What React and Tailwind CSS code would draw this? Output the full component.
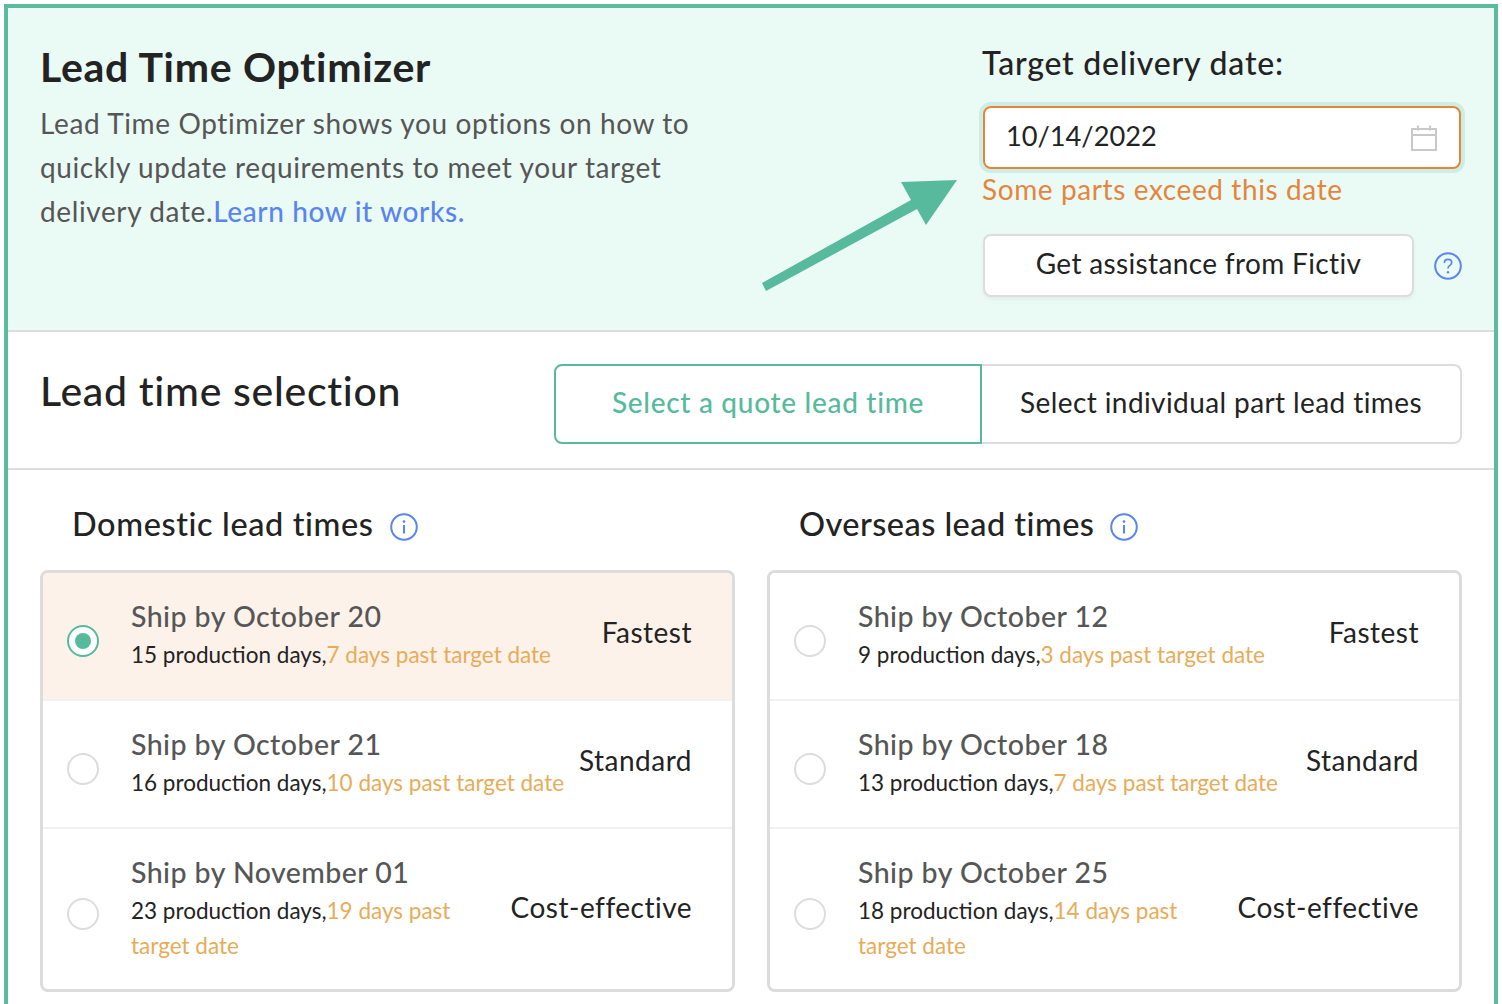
import React from "react";

const Radio = ({ checked, low }) => (
  <div className={`flex h-8 w-8 shrink-0 items-center justify-center rounded-full border-2 ${low ? "mt-[10px]" : "mt-[9px]"} ${checked ? "border-[#57ba9d] bg-white" : "border-[#dcdcdc] bg-white"}`}>
    {checked && <div className="h-4 w-4 rounded-full bg-[#57ba9d]" />}
  </div>
);

const InfoIcon = () => (
  <svg width="28" height="28" viewBox="0 0 28 28" fill="none" className="shrink-0">
    <circle cx="14" cy="14" r="12.8" stroke="#5b85ee" strokeWidth="2" />
    <circle cx="14" cy="8.6" r="1.3" fill="#5b85ee" />
    <path d="M14 12v8.5" stroke="#5b85ee" strokeWidth="2" />
  </svg>
);

const HelpIcon = () => (
  <svg width="28" height="28" viewBox="0 0 28 28" fill="none" className="shrink-0">
    <circle cx="14" cy="14" r="12.8" stroke="#5b85ee" strokeWidth="2" />
    <path d="M10.4 11c0-2.2 1.6-3.6 3.7-3.6 2.1 0 3.6 1.3 3.6 3.2 0 1.5-.8 2.2-2 3-1.1.7-1.7 1.3-1.7 2.8" stroke="#5b85ee" strokeWidth="1.7" />
    <circle cx="14" cy="20.2" r="1.2" fill="#5b85ee" />
  </svg>
);

const CalendarIcon = () => (
  <svg width="26" height="26" viewBox="0 0 26 26" fill="none" className="mt-[3px]">
    <rect x="1" y="4" width="24" height="21" stroke="#c9c9c9" strokeWidth="2" />
    <path d="M1 10h24M7 0.5v5M19 0.5v5" stroke="#c9c9c9" strokeWidth="2" />
  </svg>
);

const Row = ({ title, days, past, label, checked, tall }) => (
  <div className={`flex items-start gap-3 pl-6 pr-10 ${tall ? "h-[160px]" : "h-[126px]"} ${checked ? "bg-[#fdf2e9]" : "bg-white"}`}>
    <div className="flex h-full items-center">
      <Radio checked={checked} low={tall} />
    </div>
    <div className="ml-5 min-w-0 flex-1 pt-[23px]">
      <div className="text-[28.5px] leading-[40px] font-medium tracking-[0.45px] text-[#565656]">{title}</div>
      <div className="mt-px text-[22.5px] leading-[35px] text-[#232323]">
        {days},<span className="text-[#e8ab58]">{past}</span>
      </div>
    </div>
    <div className={`flex h-full shrink-0 items-center text-[28px] tracking-[0.5px] text-[#232323] ${tall ? "pb-1" : "pb-2"}`}>{label}</div>
  </div>
);

const LeadTimes = ({ heading, headingClass, rows }) => (
  <div className="w-[695px]">
    <div className="flex h-[100px] items-start gap-4 pl-8 pt-[33px]">
      <h3 className={`text-[32.5px] leading-[42px] font-medium text-[#232323] ${headingClass}`}>{heading}</h3>
      <div className="pt-[10px]"><InfoIcon /></div>
    </div>
    <div className="overflow-hidden rounded-lg border-[3px] border-[#dcdcdc]">
      {rows.map((r, i) => (
        <div key={r.title} className={i > 0 ? "border-t-2 border-[#f1f1f1]" : ""}>
          <Row {...r} tall={i === 2} />
        </div>
      ))}
    </div>
  </div>
);

const domestic = [
  { title: "Ship by October 20", days: "15 production days", past: "7 days past target date", label: "Fastest", checked: true },
  { title: "Ship by October 21", days: "16 production days", past: "10 days past target date", label: "Standard" },
  { title: "Ship by November 01", days: "23 production days", past: "19 days past target date", label: "Cost-effective" },
];

const overseas = [
  { title: "Ship by October 12", days: "9 production days", past: "3 days past target date", label: "Fastest" },
  { title: "Ship by October 18", days: "13 production days", past: "7 days past target date", label: "Standard" },
  { title: "Ship by October 25", days: "18 production days", past: "14 days past target date", label: "Cost-effective" },
];

export default function App() {
  return (
    <div className="h-[1004px] overflow-hidden bg-white p-1 font-[Lato,sans-serif]">
      <div className="h-[1100px] border-4 border-[#5bbb9f]">
        <section className="relative flex h-[324px] justify-between border-b-2 border-[#dddddd] bg-[#eafaf5] pl-8 pr-8">
          <div className="w-[680px] pt-[31px]">
            <h1 className="text-[41px] leading-[56px] font-bold tracking-[0.7px] text-[#232323]">Lead Time Optimizer</h1>
            <p className="mt-[6px] text-[28px] leading-[44px] tracking-[0.62px] text-[#565656]">
              Lead Time Optimizer shows you options on how to quickly update requirements to meet your target delivery date.
              <span className="font-medium text-[#5b85ee]">Learn how it works.</span>
            </p>
          </div>
          <div className="w-[480px] pt-[33px]">
            <div className="text-[32px] leading-[44px] font-medium tracking-[0.8px] text-[#232323]">Target delivery date:</div>
            <div className="mx-px mt-[21px] flex h-[63px] items-center justify-between rounded-lg border-2 border-[#e5853d] bg-white pb-[2px] pl-[21px] pr-[22px] shadow-[0_0_0_4px_#cdeee3]">
              <span className="text-[27.2px] text-[#232323]">10/14/2022</span>
              <CalendarIcon />
            </div>
            <div className="text-[28px] leading-[40px] tracking-[0.6px] text-[#e5853d]">Some parts exceed this date</div>
            <div className="mt-[25px] flex items-center justify-between">
              <button className="ml-px h-[63px] w-[431px] rounded-lg border-2 border-[#dddddd] bg-white pb-[5px] text-[28px] tracking-[0.35px] text-[#232323] shadow-[0_2px_4px_rgba(0,0,0,0.05)]">
                Get assistance from Fictiv
              </button>
              <div className="pt-[1px]"><HelpIcon /></div>
            </div>
          </div>
          <svg width="260" height="150" viewBox="700 150 260 150" className="absolute left-[692px] top-[142px]">
            <polygon fill="#57ba9d" points="762,283 766,291 917,209 926,225 957,180 901,182 911,200" />
          </svg>
        </section>

        <section className="flex h-[138px] items-start justify-between border-b-2 border-[#dddddd] pl-8 pr-8 pt-8">
          <h2 className="mt-[-1px] text-[41px] leading-[56px] font-medium tracking-[0.7px] text-[#232323]">Lead time selection</h2>
          <div className="flex h-20 w-[908px] text-[28px]">
            <div className="flex w-[428px] items-center justify-center rounded-l-lg border-2 border-[#57ba9d] pb-[5px] font-medium tracking-[0.7px] text-[#57ba9d]">Select a quote lead time</div>
            <div className="flex flex-1 items-center justify-center rounded-r-lg border-2 border-l-0 border-[#dddddd] pb-[5px] tracking-[0.4px] text-[#232323]">Select individual part lead times</div>
          </div>
        </section>

        <section className="flex justify-between pl-8 pr-8">
          <LeadTimes heading="Domestic lead times" headingClass="tracking-[0.6px]" rows={domestic} />
          <LeadTimes heading="Overseas lead times" headingClass="tracking-[0.45px]" rows={overseas} />
        </section>
      </div>
    </div>
  );
}
